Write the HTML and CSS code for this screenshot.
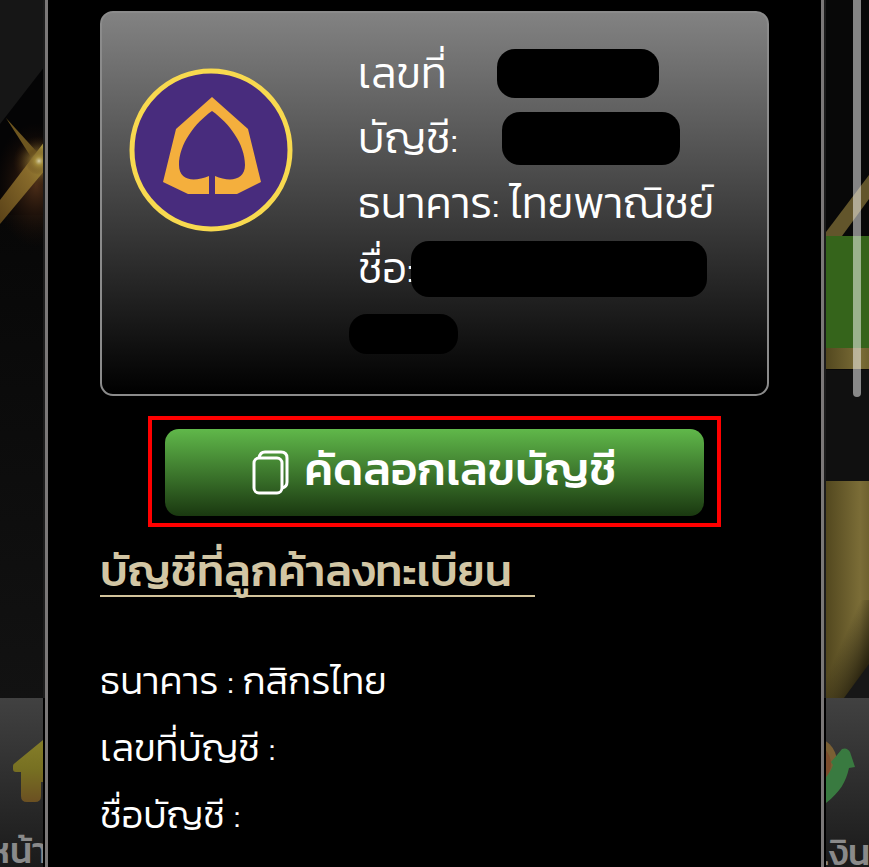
FILE: index.html
```html
<!DOCTYPE html>
<html lang="th">
<head>
  <meta charset="UTF-8">
  <meta name="viewport" content="width=device-width, initial-scale=1">
  <title>ฝากเงิน</title>
  <link rel="stylesheet" href="styles.css">
</head>
<body>

<div class="side side-left">
  <svg class="art" viewBox="0 0 45 698" preserveAspectRatio="xMinYMin slice" aria-hidden="true">
    <defs>
      <linearGradient id="beam" x1="0" y1="1" x2="1" y2="0">
        <stop offset="0" stop-color="#5a4218"/>
        <stop offset="0.6" stop-color="#86692a"/>
        <stop offset="1" stop-color="#a8953f"/>
      </linearGradient>
      <radialGradient id="flare">
        <stop offset="0" stop-color="#d6cfa8"/>
        <stop offset="0.3" stop-color="#a38c3c" stop-opacity="0.7"/>
        <stop offset="1" stop-color="#3a1c08" stop-opacity="0"/>
      </radialGradient>
      <radialGradient id="glow">
        <stop offset="0" stop-color="#6b3f20" stop-opacity="0.7"/>
        <stop offset="1" stop-color="#2a1206" stop-opacity="0"/>
      </radialGradient>
      <linearGradient id="wall" x1="0" y1="0" x2="0" y2="1">
        <stop offset="0" stop-color="#070707"/>
        <stop offset="1" stop-color="#121212"/>
      </linearGradient>
    </defs>
    <rect width="45" height="698" fill="#040405"/>
    <rect y="215" width="45" height="483" fill="url(#wall)"/>
    <path d="M0 0H45V66L0 124Z" fill="#161616"/>
    <ellipse cx="36" cy="185" rx="42" ry="62" fill="url(#glow)"/>
    <circle cx="39" cy="162" r="26" fill="url(#flare)"/>
    <path d="M6 118L37 152L31 157Z" fill="#6e561f"/>
    <path d="M0 200L45 141V170L0 224Z" fill="url(#beam)"/>
    <circle cx="39" cy="161" r="14" fill="url(#flare)"/>
    <rect x="43" width="2" height="698" fill="#1c1c1c"/>
  </svg>
  <nav class="bar">
    <a class="item" href="#">
      <svg class="home" width="78" height="64" viewBox="0 0 78 64" aria-hidden="true">
        <defs>
          <linearGradient id="home" x1="0" y1="0" x2="0" y2="1">
            <stop offset="0" stop-color="#87802a"/>
            <stop offset="0.5" stop-color="#777022"/>
            <stop offset="1" stop-color="#6b5022"/>
          </linearGradient>
        </defs>
        <path d="M35 -2L74 27Q76 29 76 32V34H68V58Q68 64 62 64H52Q48 64 48 60V44H28V58Q28 64 22 64H14Q8 64 8 58V34H3Q0 34 0 31V28Q0 26 2 25Z" fill="url(#home)"/>
      </svg>
      <span>หน้า</span>
    </a>
  </nav>
</div>

<main class="modal">
  <section class="card">
    <svg class="logo" viewBox="0 0 164 164" aria-hidden="true">
      <circle cx="82" cy="82" r="79" fill="#482c7d" stroke="#f8d94f" stroke-width="5"/>
      <path d="M83 29L119 61L132 114L108 126H86V108C100 114 116 113 116 97C116 76 100 55 83 43C66 55 50 76 50 97C50 113 65 114 80 108V126H59L34 114L47 61Z" fill="#f4af3d"/>
    </svg>
    <div class="info">
      <p><span class="label label-no">เลขที่</span><span class="mask mask-no"></span></p>
      <p><span class="label label-acc">บัญชี:</span><span class="mask mask-acc"></span></p>
      <p>ธนาคาร: ไทยพาณิชย์</p>
      <p><span class="label label-name">ชื่อ:</span><span class="mask mask-name"></span></p>
      <p><span class="mask mask-last"></span></p>
    </div>
  </section>

  <div class="highlight">
    <button class="copy" type="button">
      <svg width="38" height="45" viewBox="0 0 38 45" fill="none" stroke="#fff" stroke-width="3" aria-hidden="true">
        <rect x="2" y="8" width="28" height="35" rx="5"/>
        <path d="M7 8Q8 2 13 2H29Q35 2 35 8V32Q35 37 30 38"/>
      </svg>
      <span>คัดลอกเลขบัญชี</span>
    </button>
  </div>

  <h2>บัญชีที่ลูกค้าลงทะเบียน</h2>

  <div class="details">
    <p>ธนาคาร : กสิกรไทย</p>
    <p>เลขที่บัญชี :</p>
    <p>ชื่อบัญชี :</p>
  </div>
</main>

<div class="side side-right">
  <svg class="art" viewBox="0 0 45 698" preserveAspectRatio="xMinYMin slice" aria-hidden="true">
    <defs>
      <linearGradient id="gold" x1="0" y1="0" x2="1" y2="0">
        <stop offset="0" stop-color="#53481f"/>
        <stop offset="0.8" stop-color="#7b6d37"/>
        <stop offset="1" stop-color="#6f622f"/>
      </linearGradient>
      <linearGradient id="goldshade" x1="0" y1="0" x2="1" y2="1">
        <stop offset="0.4" stop-color="#2a2410" stop-opacity="0"/>
        <stop offset="0.8" stop-color="#2a2410"/>
      </linearGradient>
    </defs>
    <rect width="45" height="698" fill="#080808"/>
    <rect y="370" width="45" height="111" fill="#101010"/>
    <path d="M2 232L45 175V199L18 236H2Z" fill="#62552b"/>
    <rect x="2" y="236" width="43" height="112" fill="#35641b"/>
    <rect x="2" y="348" width="43" height="21" fill="url(#gold)"/>
    <rect x="2" y="481" width="43" height="217" fill="url(#gold)"/>
    <rect x="2" y="600" width="43" height="98" fill="url(#goldshade)"/>
    <path d="M45 664V698H20Z" fill="#171717"/>
    <rect width="2" height="698" fill="#1c1c1c"/>
  </svg>
  <nav class="bar">
    <a class="item" href="#">
      <svg class="coin" width="62" height="66" viewBox="0 0 62 66" aria-hidden="true">
        <circle cx="18" cy="24" r="25" fill="#7a5f33"/>
        <circle cx="16" cy="26" r="21" fill="#7c4d2c"/>
        <path d="M0 66V56C18 54 34 42 39 27L37 24Q44 16 48 11Q53 9 56 14L61 29L55 30C52 44 46 54 32 65Q16 74 0 66Z" fill="#397a40"/>
      </svg>
      <span>เงิน</span>
    </a>
  </nav>
  <div class="scroll"></div>
</div>

</body>
</html>
```
FILE: styles.css
```css
* { box-sizing: border-box; }
body { margin: 0; display: flex; min-height: 100vh; background: #000; color: #fff; font-family: Kanit, Prompt, "Noto Sans Thai", "Noto Sans", sans-serif; font-weight: 300; }
p, h2 { margin: 0; }

/* page behind the dialog */
.side { position: relative; flex: none; width: 45px; height: 100vh; display: flex; flex-direction: column; overflow: hidden; }
.art { flex: 1; width: 100%; min-height: 0; }
.bar { flex: none; height: 169px; display: flex; overflow: hidden; background: linear-gradient(#414141, #1a1a1a); }
.side-left .bar { margin-right: 2px; }
.side-right .bar { margin-left: 2px; }
.item { flex: none; padding-top: 40px; display: flex; flex-direction: column; align-items: flex-start; gap: 26px; color: #8a8a8a; font-size: 36px; font-weight: 500; line-height: 44px; text-decoration: none; }
.item svg { flex: none; overflow: visible; }
.item span { margin-left: -8px; }
.side-left .item span { margin-left: -12px; }
.home { margin-left: 13px; }
.coin { margin-left: -32px; }
.scroll { position: absolute; top: 0; right: 8px; width: 8px; height: 397px; border-radius: 0 0 4px 4px; background: rgba(255, 255, 255, 0.5); }

/* dialog */
.modal { flex: 1; min-width: 0; padding: 11px 52px 0; border: solid #7b7878; border-width: 0 3px; background: #000; }
.card { display: flex; gap: 65px; padding: 28px 27px; border: 2px solid #8b8b8b; border-radius: 13px; background: linear-gradient(#828282, #000); }
.logo { flex: none; width: 164px; height: 164px; margin-top: 27px; }
.info { flex: 1; min-width: 0; font-size: 43px; line-height: 65px; white-space: nowrap; }
.info p { display: flex; align-items: center; height: 65px; }
.label { flex: none; }
.label-no { width: 139px; }
.label-acc { width: 144px; }
.label-name { width: 53px; }
.mask { flex: none; border-radius: 18px; background: #000; }
.mask-no { width: 162px; height: 49px; }
.mask-acc { width: 178px; height: 53px; }
.mask-name { width: 296px; height: 56px; }
.mask-last { width: 109px; height: 40px; margin-left: -9px; }

.highlight { margin: 20px 48px 0; padding: 9px 13px 7px; border: 4px solid #f00; }
.copy { width: 100%; height: 87px; padding: 0 0 8px; display: flex; justify-content: center; align-items: center; gap: 14px; border: 0; border-radius: 14px; background: linear-gradient(#60b84a, #1a3810); color: #fff; font: inherit; font-size: 46px; font-weight: 500; cursor: pointer; }
.copy svg { margin-top: 8px; }

h2 { display: inline-block; min-width: 435px; margin-top: 20px; border-bottom: 2px solid #d2c39b; color: #d2c6a4; font-size: 44px; font-weight: 500; line-height: 48px; white-space: nowrap; }
.details { margin-top: 50px; font-size: 38px; line-height: 67px; }
```
